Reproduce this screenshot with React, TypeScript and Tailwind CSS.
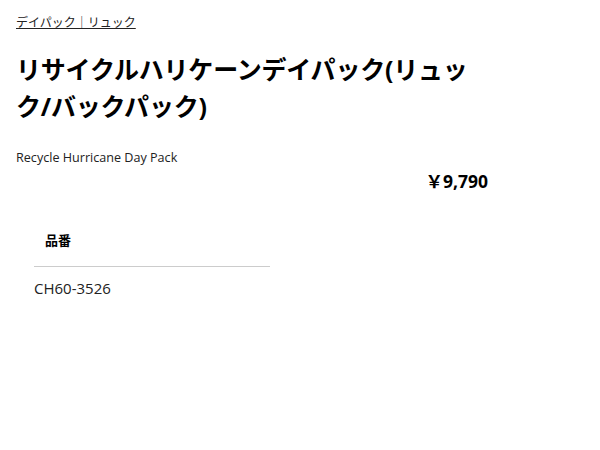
import React from 'react';

const font = { fontFamily: '"Open Sans", "Noto Sans CJK JP", sans-serif' };

export default function App() {
    return (
        <div className="w-[600px] h-[450px] bg-white text-black" style={font}>
            <div className="w-[488px] pl-4 pt-[14px]">
                <a href="#" className="block text-[12px] leading-[18px] underline text-[#222]">
                    デイパック｜リュック
                </a>
                <h1 className="mt-[19px] text-[25px] leading-[37px] font-bold tracking-[-0.2px]">
                    リサイクルハリケーンデイパック(リュック/バックパック)
                </h1>
                <p className="mt-[24px] text-[12.6px] leading-[18px] text-[#222]">
                    Recycle Hurricane Day Pack
                </p>
                <div className="mt-[2px] text-right text-[17.5px] leading-[24px] font-bold">
                    ￥9,790
                </div>
            </div>
            <div className="ml-[34px] mt-[38px] w-[236px]">
                <div className="pl-[11px] pb-[17px] text-[13px] leading-[18px] font-bold">品番</div>
                <div className="border-t border-[#cccccc]" />
                <div className="pt-[11px] text-[15px] leading-[20px] text-[#222]">CH60-3526</div>
            </div>
        </div>
    );
}
